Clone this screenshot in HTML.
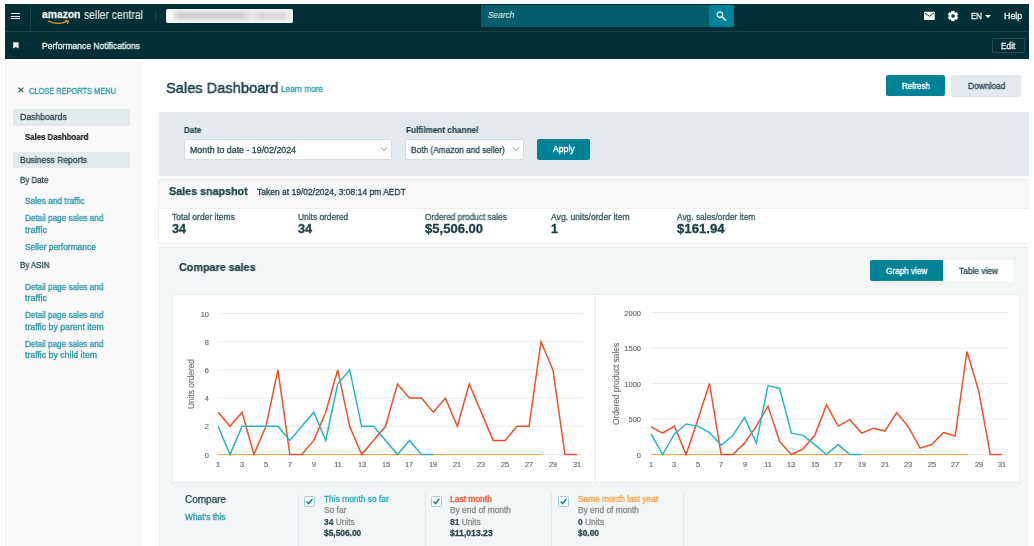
<!DOCTYPE html>
<html><head><meta charset="utf-8"><style>
html,body{margin:0;padding:0;}
body{width:1034px;height:546px;position:relative;overflow:hidden;background:#fff;font-family:"Liberation Sans", sans-serif;}
.t{position:absolute;white-space:nowrap;will-change:transform;}
.r{position:absolute;}
</style></head><body>
<div class="r" style="left:5px;top:4px;width:1024.00px;height:55.40px;background:#002f36;"></div>
<div class="r" style="left:5px;top:31px;width:1024.00px;height:1.00px;background:#1b4248;"></div>
<div class="r" style="left:30px;top:4px;width:1.00px;height:27.00px;background:#1b4248;"></div>
<div class="r" style="left:11px;top:12.8px;width:9.00px;height:1.30px;background:#e8eeee;"></div>
<div class="r" style="left:11px;top:15.5px;width:9.00px;height:1.30px;background:#e8eeee;"></div>
<div class="r" style="left:11px;top:18.2px;width:9.00px;height:1.30px;background:#e8eeee;"></div>
<div class="t" style="left:42.20px;top:9.22px;font-size:11.2px;line-height:11.2px;color:#f2f5f5;font-weight:700;-webkit-text-stroke:0.3px #f2f5f5;transform:scaleX(0.9257);transform-origin:0 0;">amazon</div>
<div class="t" style="left:83.60px;top:8.54px;font-size:12px;line-height:12px;color:#e6ecec;-webkit-text-stroke:0.15px #e6ecec;transform:scaleX(0.8674);transform-origin:0 0;">seller central</div>
<svg class="r" style="left:46px;top:18.7px" width="26" height="8" viewBox="0 0 26 8"><path d="M2.5 2.2 Q12 6.6 21.5 2.4" stroke="#e8912d" stroke-width="1.3" fill="none" stroke-linecap="round"/><path d="M19.3 1.4 L22.4 1.9 L21.6 4.6" stroke="#e8912d" stroke-width="1.1" fill="none" stroke-linecap="round"/></svg>
<div class="r" style="left:154.5px;top:10px;width:1.00px;height:12.00px;background:#1b4248;"></div>
<div class="r" style="left:166.1px;top:8.8px;width:126.8px;height:14.5px;background:#f6f6f6;border-radius:2px;overflow:hidden"><div style="position:absolute;left:9px;top:3.5px;width:73px;height:7px;background:#c9c9c9;filter:blur(2.2px)"></div><div style="position:absolute;left:91px;top:3.5px;width:30px;height:7px;background:#d4d4d4;filter:blur(2.2px)"></div><div style="position:absolute;left:78px;top:4px;width:16px;height:6px;background:#dedede;filter:blur(2px)"></div></div>
<div class="r" style="left:481px;top:5px;width:228.00px;height:22.00px;background:#005e6c;"></div>
<div class="r" style="left:709px;top:5px;width:25.40px;height:22.00px;background:#008296;"></div>
<div class="t" style="left:488.10px;top:11.28px;font-size:9px;line-height:9px;color:#dfe9ea;font-style:italic;-webkit-text-stroke:0.1px #dfe9ea;transform:scaleX(0.9223);transform-origin:0 0;">Search</div>
<svg class="r" style="left:714px;top:9px" width="16" height="16" viewBox="0 0 16 16"><circle cx="5.9" cy="5.6" r="2.75" stroke="#f2f6f6" stroke-width="1.2" fill="none"/><path d="M8 7.8 L11.6 11.2" stroke="#f2f6f6" stroke-width="1.4" stroke-linecap="round"/></svg>
<svg class="r" style="left:923px;top:11px" width="13" height="10" viewBox="0 0 13 10"><rect x="1" y="0.8" width="10.8" height="8.2" rx="0.7" fill="#f4f7f7"/><path d="M2 2.2 L6.4 5.2 L10.8 2.2" stroke="#002f36" stroke-width="0.9" fill="none"/></svg>
<svg class="r" style="left:947.1px;top:9.9px" width="12" height="12" viewBox="0 0 12 12"><polygon points="4.56,1.00 7.44,1.00 7.70,2.49 8.19,2.78 9.61,2.26 11.05,4.75 9.89,5.71 9.89,6.29 11.05,7.25 9.61,9.74 8.19,9.22 7.70,9.51 7.44,11.00 4.56,11.00 4.30,9.51 3.81,9.22 2.39,9.74 0.95,7.25 2.11,6.29 2.11,5.71 0.95,4.75 2.39,2.26 3.81,2.78 4.30,2.49" fill="#f4f7f7" stroke="#f4f7f7" stroke-width="0.3" stroke-linejoin="round"/><circle cx="6" cy="6" r="1.7" fill="#002f36"/></svg>
<div class="t" style="left:971.00px;top:11.75px;font-size:8.8px;line-height:8.8px;color:#eef3f3;-webkit-text-stroke:0.3px #eef3f3;transform:scaleX(0.8998);transform-origin:0 0;">EN</div>
<svg class="r" style="left:984px;top:14px" width="8" height="5" viewBox="0 0 8 5"><path d="M1 1 L7 1 L4 4 Z" fill="#eef3f3"/></svg>
<div class="t" style="left:1003.50px;top:11.75px;font-size:8.8px;line-height:8.8px;color:#eef3f3;-webkit-text-stroke:0.3px #eef3f3;transform:scaleX(1.0056);transform-origin:0 0;">Help</div>
<svg class="r" style="left:13px;top:42px" width="6" height="7" viewBox="0 0 6 7"><path d="M0.2 0.2 H5.6 V6.6 L2.9 4.9 L0.2 6.6 Z" fill="#f4f7f7"/></svg>
<div class="t" style="left:42.00px;top:41.52px;font-size:8.6px;line-height:8.6px;color:#eef3f3;-webkit-text-stroke:0.3px #eef3f3;transform:scaleX(0.9953);transform-origin:0 0;">Performance Notifications</div>
<div class="r" style="left:991.5px;top:37.7px;width:33.5px;height:15.3px;box-sizing:border-box;border:1px solid #224a4f;border-radius:1px"></div>
<div class="t" style="left:1000.80px;top:41.77px;font-size:8.3px;line-height:8.3px;color:#eef3f3;-webkit-text-stroke:0.3px #eef3f3;transform:scaleX(0.9929);transform-origin:0 0;">Edit</div>
<div class="r" style="left:5px;top:61px;width:137.50px;height:485.00px;background:#f9f9f9;"></div>
<div class="r" style="left:5px;top:61px;width:1.00px;height:485.00px;background:#f1f1f1;"></div>
<svg class="r" style="left:17px;top:86px" width="8" height="8" viewBox="0 0 8 8"><path d="M1.6 1.6 L6.2 6.2 M6.2 1.6 L1.6 6.2" stroke="#33494e" stroke-width="1.1"/></svg>
<div class="t" style="left:28.80px;top:86.62px;font-size:8.6px;line-height:8.6px;color:#2b95a6;-webkit-text-stroke:0.3px #2b95a6;transform:scaleX(0.8642);transform-origin:0 0;">CLOSE REPORTS MENU</div>
<div class="r" style="left:13px;top:109.2px;width:117.30px;height:16.40px;background:#e3eaec;"></div>
<div class="t" style="left:19.90px;top:113.26px;font-size:8.9px;line-height:8.9px;color:#2c4a50;-webkit-text-stroke:0.3px #2c4a50;transform:scaleX(0.9753);transform-origin:0 0;">Dashboards</div>
<div class="t" style="left:25.00px;top:132.62px;font-size:8.6px;line-height:8.6px;color:#0f1111;font-weight:700;-webkit-text-stroke:0.15px #0f1111;transform:scaleX(0.9086);transform-origin:0 0;">Sales Dashboard</div>
<div class="r" style="left:13px;top:151.8px;width:117.30px;height:16.60px;background:#e3eaec;"></div>
<div class="t" style="left:19.90px;top:155.96px;font-size:8.9px;line-height:8.9px;color:#2c4a50;-webkit-text-stroke:0.3px #2c4a50;transform:scaleX(0.9649);transform-origin:0 0;">Business Reports</div>
<div class="t" style="left:19.80px;top:175.87px;font-size:8.3px;line-height:8.3px;color:#2c4a50;-webkit-text-stroke:0.3px #2c4a50;transform:scaleX(0.9586);transform-origin:0 0;">By Date</div>
<div class="t" style="left:25.10px;top:196.89px;font-size:8.4px;line-height:8.4px;color:#2b95a6;-webkit-text-stroke:0.3px #2b95a6;transform:scaleX(0.9921);transform-origin:0 0;">Sales and traffic</div>
<div class="t" style="left:25.10px;top:214.19px;font-size:8.4px;line-height:8.4px;color:#2b95a6;-webkit-text-stroke:0.3px #2b95a6;transform:scaleX(0.9717);transform-origin:0 0;">Detail page sales and</div>
<div class="t" style="left:25.10px;top:225.79px;font-size:8.4px;line-height:8.4px;color:#2b95a6;-webkit-text-stroke:0.3px #2b95a6;transform:scaleX(1.0793);transform-origin:0 0;">traffic</div>
<div class="t" style="left:25.10px;top:243.19px;font-size:8.4px;line-height:8.4px;color:#2b95a6;-webkit-text-stroke:0.3px #2b95a6;transform:scaleX(1.0006);transform-origin:0 0;">Seller performance</div>
<div class="t" style="left:19.80px;top:261.47px;font-size:8.3px;line-height:8.3px;color:#2c4a50;-webkit-text-stroke:0.3px #2c4a50;transform:scaleX(0.9512);transform-origin:0 0;">By ASIN</div>
<div class="t" style="left:25.10px;top:282.69px;font-size:8.4px;line-height:8.4px;color:#2b95a6;-webkit-text-stroke:0.3px #2b95a6;transform:scaleX(0.9717);transform-origin:0 0;">Detail page sales and</div>
<div class="t" style="left:25.10px;top:293.99px;font-size:8.4px;line-height:8.4px;color:#2b95a6;-webkit-text-stroke:0.3px #2b95a6;transform:scaleX(1.0793);transform-origin:0 0;">traffic</div>
<div class="t" style="left:25.10px;top:311.49px;font-size:8.4px;line-height:8.4px;color:#2b95a6;-webkit-text-stroke:0.3px #2b95a6;transform:scaleX(0.9717);transform-origin:0 0;">Detail page sales and</div>
<div class="t" style="left:25.10px;top:322.79px;font-size:8.4px;line-height:8.4px;color:#2b95a6;-webkit-text-stroke:0.3px #2b95a6;transform:scaleX(1.0403);transform-origin:0 0;">traffic by parent item</div>
<div class="t" style="left:25.10px;top:339.99px;font-size:8.4px;line-height:8.4px;color:#2b95a6;-webkit-text-stroke:0.3px #2b95a6;transform:scaleX(0.9717);transform-origin:0 0;">Detail page sales and</div>
<div class="t" style="left:25.10px;top:351.29px;font-size:8.4px;line-height:8.4px;color:#2b95a6;-webkit-text-stroke:0.3px #2b95a6;transform:scaleX(1.0418);transform-origin:0 0;">traffic by child item</div>
<div class="t" style="left:165.80px;top:80.77px;font-size:14.8px;line-height:14.8px;color:#163840;-webkit-text-stroke:0.45px #163840;transform:scaleX(0.9892);transform-origin:0 0;">Sales Dashboard</div>
<div class="t" style="left:280.90px;top:85.37px;font-size:8.3px;line-height:8.3px;color:#2b95a6;-webkit-text-stroke:0.3px #2b95a6;transform:scaleX(0.9873);transform-origin:0 0;">Learn more</div>
<div class="r" style="left:886px;top:75.4px;width:59px;height:20.8px;background:#008296;border-radius:2px"></div>
<div class="t" style="left:901.70px;top:81.99px;font-size:8.4px;line-height:8.4px;color:#fff;-webkit-text-stroke:0.35px #fff;transform:scaleX(0.9486);transform-origin:0 0;">Refresh</div>
<div class="r" style="left:951.3px;top:75.4px;width:69.7px;height:20.8px;background:#e3e9ec;border-radius:2px;box-shadow:0 1px 1px rgba(0,0,0,0.12)"></div>
<div class="t" style="left:967.60px;top:81.92px;font-size:8.6px;line-height:8.6px;color:#2c4a50;-webkit-text-stroke:0.3px #2c4a50;transform:scaleX(0.9779);transform-origin:0 0;">Download</div>
<div class="r" style="left:158.6px;top:112px;width:870.40px;height:64.00px;background:#e3e9ec;"></div>
<div class="t" style="left:184.40px;top:126.19px;font-size:8.4px;line-height:8.4px;color:#1b3c43;font-weight:700;-webkit-text-stroke:0.1px #1b3c43;transform:scaleX(0.9557);transform-origin:0 0;">Date</div>
<div class="r" style="left:183.6px;top:138.8px;width:208.7px;height:21.4px;background:#fff;box-sizing:border-box;border:1px solid #d5dcde;border-radius:2px"></div>
<div class="t" style="left:189.90px;top:145.52px;font-size:8.6px;line-height:8.6px;color:#2c4a50;-webkit-text-stroke:0.3px #2c4a50;transform:scaleX(1.0274);transform-origin:0 0;">Month to date - 19/02/2024</div>
<svg class="r" style="left:380px;top:146px" width="8" height="6" viewBox="0 0 8 6"><path d="M1 1.5 L4 4.5 L7 1.5" stroke="#6b7b80" stroke-width="0.9" fill="none"/></svg>
<div class="t" style="left:405.80px;top:126.19px;font-size:8.4px;line-height:8.4px;color:#1b3c43;font-weight:700;-webkit-text-stroke:0.1px #1b3c43;transform:scaleX(0.9771);transform-origin:0 0;">Fulfilment channel</div>
<div class="r" style="left:405.4px;top:139.1px;width:118.8px;height:21.3px;background:#fff;box-sizing:border-box;border:1px solid #d5dcde;border-radius:2px"></div>
<div class="t" style="left:410.60px;top:145.80px;font-size:8.5px;line-height:8.5px;color:#2c4a50;-webkit-text-stroke:0.3px #2c4a50;transform:scaleX(0.9781);transform-origin:0 0;">Both (Amazon and seller)</div>
<svg class="r" style="left:512px;top:146px" width="8" height="6" viewBox="0 0 8 6"><path d="M1 1.5 L4 4.5 L7 1.5" stroke="#6b7b80" stroke-width="0.9" fill="none"/></svg>
<div class="r" style="left:537.3px;top:138.5px;width:52.7px;height:21.3px;background:#008296;border-radius:2px"></div>
<div class="t" style="left:552.80px;top:144.72px;font-size:8.6px;line-height:8.6px;color:#fff;-webkit-text-stroke:0.35px #fff;transform:scaleX(1.0087);transform-origin:0 0;">Apply</div>
<div class="r" style="left:158.4px;top:179px;width:870.6px;height:64.5px;box-sizing:border-box;border:1px solid #eceeee;border-right:none;background:#fff"></div>
<div class="r" style="left:159.4px;top:180px;width:869.60px;height:27.50px;background:#f7f7f7;"></div>
<div class="r" style="left:159.4px;top:207.5px;width:869.60px;height:1.00px;background:#efefef;"></div>
<div class="t" style="left:168.80px;top:186.17px;font-size:10.9px;line-height:10.9px;color:#1b3c43;font-weight:700;-webkit-text-stroke:0.25px #1b3c43;transform:scaleX(0.9856);transform-origin:0 0;">Sales snapshot</div>
<div class="t" style="left:257.30px;top:187.80px;font-size:8.5px;line-height:8.5px;color:#1b3c43;-webkit-text-stroke:0.3px #1b3c43;transform:scaleX(0.9984);transform-origin:0 0;">Taken at 19/02/2024, 3:08:14 pm AEDT</div>
<div class="t" style="left:171.90px;top:212.99px;font-size:8.4px;line-height:8.4px;color:#3a5a60;-webkit-text-stroke:0.3px #3a5a60;transform:scaleX(1.0163);transform-origin:0 0;">Total order items</div>
<div class="t" style="left:171.90px;top:222.73px;font-size:12.6px;line-height:12.6px;color:#1b3c43;font-weight:700;-webkit-text-stroke:0.3px #1b3c43;transform:scaleX(1.0062);transform-origin:0 0;">34</div>
<div class="t" style="left:298.00px;top:212.99px;font-size:8.4px;line-height:8.4px;color:#3a5a60;-webkit-text-stroke:0.3px #3a5a60;">Units ordered</div>
<div class="t" style="left:298.00px;top:222.73px;font-size:12.6px;line-height:12.6px;color:#1b3c43;font-weight:700;-webkit-text-stroke:0.3px #1b3c43;transform:scaleX(1.0062);transform-origin:0 0;">34</div>
<div class="t" style="left:425.10px;top:212.99px;font-size:8.4px;line-height:8.4px;color:#3a5a60;-webkit-text-stroke:0.3px #3a5a60;transform:scaleX(0.9879);transform-origin:0 0;">Ordered product sales</div>
<div class="t" style="left:425.10px;top:222.73px;font-size:12.6px;line-height:12.6px;color:#1b3c43;font-weight:700;-webkit-text-stroke:0.3px #1b3c43;transform:scaleX(1.0366);transform-origin:0 0;">$5,506.00</div>
<div class="t" style="left:550.90px;top:212.99px;font-size:8.4px;line-height:8.4px;color:#3a5a60;-webkit-text-stroke:0.3px #3a5a60;transform:scaleX(1.0263);transform-origin:0 0;">Avg. units/order item</div>
<div class="t" style="left:550.90px;top:222.73px;font-size:12.6px;line-height:12.6px;color:#1b3c43;font-weight:700;-webkit-text-stroke:0.3px #1b3c43;">1</div>
<div class="t" style="left:677.40px;top:212.99px;font-size:8.4px;line-height:8.4px;color:#3a5a60;-webkit-text-stroke:0.3px #3a5a60;transform:scaleX(0.9969);transform-origin:0 0;">Avg. sales/order item</div>
<div class="t" style="left:677.40px;top:222.73px;font-size:12.6px;line-height:12.6px;color:#1b3c43;font-weight:700;-webkit-text-stroke:0.3px #1b3c43;transform:scaleX(1.0452);transform-origin:0 0;">$161.94</div>
<div class="r" style="left:158.5px;top:247px;width:870.5px;height:310px;box-sizing:border-box;border:1px solid #eceeee;border-right:none;background:#f3f6f7"></div>
<div class="t" style="left:178.50px;top:261.77px;font-size:10.9px;line-height:10.9px;color:#1b3c43;font-weight:700;-webkit-text-stroke:0.25px #1b3c43;transform:scaleX(0.9891);transform-origin:0 0;">Compare sales</div>
<div class="r" style="left:870px;top:260px;width:73.3px;height:20.8px;background:#008296;border-radius:2px 0 0 2px"></div>
<div class="t" style="left:886.00px;top:266.79px;font-size:8.4px;line-height:8.4px;color:#fff;-webkit-text-stroke:0.35px #fff;transform:scaleX(0.9792);transform-origin:0 0;">Graph view</div>
<div class="r" style="left:943.3px;top:260px;width:69.8px;height:20.8px;background:#fff;border-radius:0 2px 2px 0"></div>
<div class="t" style="left:959.30px;top:266.70px;font-size:8.5px;line-height:8.5px;color:#2c4a50;-webkit-text-stroke:0.3px #2c4a50;transform:scaleX(0.9828);transform-origin:0 0;">Table view</div>
<div class="r" style="left:171.8px;top:294px;width:848px;height:189px;box-sizing:border-box;border:1px solid #e9eded;background:#fff"></div>
<div class="r" style="left:595.3px;top:295px;width:1.00px;height:187.00px;background:#eceeee;"></div>
<svg class="r" style="left:0;top:0" width="1034" height="546"><line x1="217.8" y1="454.50" x2="583.2" y2="454.50" stroke="#ececec" stroke-width="1"/><line x1="217.8" y1="426.30" x2="583.2" y2="426.30" stroke="#ececec" stroke-width="1"/><line x1="217.8" y1="398.10" x2="583.2" y2="398.10" stroke="#ececec" stroke-width="1"/><line x1="217.8" y1="369.90" x2="583.2" y2="369.90" stroke="#ececec" stroke-width="1"/><line x1="217.8" y1="341.70" x2="583.2" y2="341.70" stroke="#ececec" stroke-width="1"/><line x1="217.8" y1="313.50" x2="583.2" y2="313.50" stroke="#ececec" stroke-width="1"/><line x1="218.1" y1="454.50" x2="541.02" y2="454.50" stroke="#f6a847" stroke-width="1.2"/><polyline points="218.10,412.20 230.06,426.30 242.02,412.20 253.98,454.50 265.94,426.30 277.90,369.90 289.86,454.50 301.82,454.50 313.78,440.40 325.74,412.20 337.70,369.90 349.66,426.30 361.62,454.50 373.58,440.40 385.54,426.30 397.50,384.00 409.46,398.10 421.42,398.10 433.38,412.20 445.34,398.10 457.30,426.30 469.26,384.00 481.22,412.20 493.18,440.40 505.14,440.40 517.10,426.30 529.06,426.30 541.02,341.70 552.98,369.90 564.94,454.50 576.90,454.50" fill="none" stroke="#e8512a" stroke-width="1.5" stroke-linejoin="miter"/><polyline points="218.10,426.30 230.06,454.50 242.02,426.30 253.98,426.30 265.94,426.30 277.90,426.30 289.86,440.40 301.82,426.30 313.78,412.20 325.74,440.40 337.70,384.00 349.66,369.90 361.62,426.30 373.58,426.30 385.54,440.40 397.50,454.50 409.46,440.40 421.42,454.50 433.38,454.50" fill="none" stroke="#2ab3c3" stroke-width="1.5" stroke-linejoin="miter"/></svg>
<div class="t" style="left:148.6px;width:60px;text-align:right;top:451.50px;font-size:7.5px;line-height:7.5px;color:#6a6a6a;-webkit-text-stroke:0.15px #6a6a6a">0</div>
<div class="t" style="left:148.6px;width:60px;text-align:right;top:423.30px;font-size:7.5px;line-height:7.5px;color:#6a6a6a;-webkit-text-stroke:0.15px #6a6a6a">2</div>
<div class="t" style="left:148.6px;width:60px;text-align:right;top:395.10px;font-size:7.5px;line-height:7.5px;color:#6a6a6a;-webkit-text-stroke:0.15px #6a6a6a">4</div>
<div class="t" style="left:148.6px;width:60px;text-align:right;top:366.90px;font-size:7.5px;line-height:7.5px;color:#6a6a6a;-webkit-text-stroke:0.15px #6a6a6a">6</div>
<div class="t" style="left:148.6px;width:60px;text-align:right;top:338.70px;font-size:7.5px;line-height:7.5px;color:#6a6a6a;-webkit-text-stroke:0.15px #6a6a6a">8</div>
<div class="t" style="left:148.6px;width:60px;text-align:right;top:310.50px;font-size:7.5px;line-height:7.5px;color:#6a6a6a;-webkit-text-stroke:0.15px #6a6a6a">10</div>
<div class="t" style="left:198.10px;width:40px;text-align:center;top:460.53px;font-size:7.4px;line-height:7.4px;color:#6a6a6a;-webkit-text-stroke:0.15px #6a6a6a">1</div>
<div class="t" style="left:222.02px;width:40px;text-align:center;top:460.53px;font-size:7.4px;line-height:7.4px;color:#6a6a6a;-webkit-text-stroke:0.15px #6a6a6a">3</div>
<div class="t" style="left:245.94px;width:40px;text-align:center;top:460.53px;font-size:7.4px;line-height:7.4px;color:#6a6a6a;-webkit-text-stroke:0.15px #6a6a6a">5</div>
<div class="t" style="left:269.86px;width:40px;text-align:center;top:460.53px;font-size:7.4px;line-height:7.4px;color:#6a6a6a;-webkit-text-stroke:0.15px #6a6a6a">7</div>
<div class="t" style="left:293.78px;width:40px;text-align:center;top:460.53px;font-size:7.4px;line-height:7.4px;color:#6a6a6a;-webkit-text-stroke:0.15px #6a6a6a">9</div>
<div class="t" style="left:317.70px;width:40px;text-align:center;top:460.53px;font-size:7.4px;line-height:7.4px;color:#6a6a6a;-webkit-text-stroke:0.15px #6a6a6a">11</div>
<div class="t" style="left:341.62px;width:40px;text-align:center;top:460.53px;font-size:7.4px;line-height:7.4px;color:#6a6a6a;-webkit-text-stroke:0.15px #6a6a6a">13</div>
<div class="t" style="left:365.54px;width:40px;text-align:center;top:460.53px;font-size:7.4px;line-height:7.4px;color:#6a6a6a;-webkit-text-stroke:0.15px #6a6a6a">15</div>
<div class="t" style="left:389.46px;width:40px;text-align:center;top:460.53px;font-size:7.4px;line-height:7.4px;color:#6a6a6a;-webkit-text-stroke:0.15px #6a6a6a">17</div>
<div class="t" style="left:413.38px;width:40px;text-align:center;top:460.53px;font-size:7.4px;line-height:7.4px;color:#6a6a6a;-webkit-text-stroke:0.15px #6a6a6a">19</div>
<div class="t" style="left:437.30px;width:40px;text-align:center;top:460.53px;font-size:7.4px;line-height:7.4px;color:#6a6a6a;-webkit-text-stroke:0.15px #6a6a6a">21</div>
<div class="t" style="left:461.22px;width:40px;text-align:center;top:460.53px;font-size:7.4px;line-height:7.4px;color:#6a6a6a;-webkit-text-stroke:0.15px #6a6a6a">23</div>
<div class="t" style="left:485.14px;width:40px;text-align:center;top:460.53px;font-size:7.4px;line-height:7.4px;color:#6a6a6a;-webkit-text-stroke:0.15px #6a6a6a">25</div>
<div class="t" style="left:509.06px;width:40px;text-align:center;top:460.53px;font-size:7.4px;line-height:7.4px;color:#6a6a6a;-webkit-text-stroke:0.15px #6a6a6a">27</div>
<div class="t" style="left:532.98px;width:40px;text-align:center;top:460.53px;font-size:7.4px;line-height:7.4px;color:#6a6a6a;-webkit-text-stroke:0.15px #6a6a6a">29</div>
<div class="t" style="left:556.90px;width:40px;text-align:center;top:460.53px;font-size:7.4px;line-height:7.4px;color:#6a6a6a;-webkit-text-stroke:0.15px #6a6a6a">31</div>
<div class="t" style="left:130.7px;top:380px;width:120px;text-align:center;font-size:8.3px;line-height:8px;color:#6f6f6f;-webkit-text-stroke:0.15px #6f6f6f;transform:rotate(-90deg);transform-origin:60px 4px">Units ordered</div>
<svg class="r" style="left:0;top:0" width="1034" height="546"><line x1="650.8" y1="454.50" x2="1007.6" y2="454.50" stroke="#ececec" stroke-width="1"/><line x1="650.8" y1="419.00" x2="1007.6" y2="419.00" stroke="#ececec" stroke-width="1"/><line x1="650.8" y1="383.50" x2="1007.6" y2="383.50" stroke="#ececec" stroke-width="1"/><line x1="650.8" y1="348.00" x2="1007.6" y2="348.00" stroke="#ececec" stroke-width="1"/><line x1="650.8" y1="312.50" x2="1007.6" y2="312.50" stroke="#ececec" stroke-width="1"/><line x1="651" y1="454.50" x2="966.90" y2="454.50" stroke="#f6a847" stroke-width="1.2"/><polyline points="651.00,426.81 662.70,433.20 674.40,426.10 686.10,454.50 697.80,419.71 709.50,383.50 721.20,454.50 732.90,454.50 744.60,443.14 756.30,426.10 768.00,406.22 779.70,441.72 791.40,454.50 803.10,448.82 814.80,435.33 826.50,404.80 838.20,426.10 849.90,419.71 861.60,433.20 873.30,428.23 885.00,431.07 896.70,412.61 908.40,426.81 920.10,448.11 931.80,444.56 943.50,432.49 955.20,436.04 966.90,351.55 978.60,390.60 990.30,454.50 1002.00,454.50" fill="none" stroke="#e8512a" stroke-width="1.5" stroke-linejoin="miter"/><polyline points="651.00,433.91 662.70,454.50 674.40,433.91 686.10,423.97 697.80,426.10 709.50,432.49 721.20,445.27 732.90,435.33 744.60,417.58 756.30,443.14 768.00,385.63 779.70,388.47 791.40,433.20 803.10,435.33 814.80,444.56 826.50,454.50 838.20,444.56 849.90,454.50 861.60,454.50" fill="none" stroke="#2ab3c3" stroke-width="1.5" stroke-linejoin="miter"/></svg>
<div class="t" style="left:581.2px;width:60px;text-align:right;top:451.50px;font-size:7.5px;line-height:7.5px;color:#6a6a6a;-webkit-text-stroke:0.15px #6a6a6a">0</div>
<div class="t" style="left:581.2px;width:60px;text-align:right;top:416.00px;font-size:7.5px;line-height:7.5px;color:#6a6a6a;-webkit-text-stroke:0.15px #6a6a6a">500</div>
<div class="t" style="left:581.2px;width:60px;text-align:right;top:380.50px;font-size:7.5px;line-height:7.5px;color:#6a6a6a;-webkit-text-stroke:0.15px #6a6a6a">1000</div>
<div class="t" style="left:581.2px;width:60px;text-align:right;top:345.00px;font-size:7.5px;line-height:7.5px;color:#6a6a6a;-webkit-text-stroke:0.15px #6a6a6a">1500</div>
<div class="t" style="left:581.2px;width:60px;text-align:right;top:309.50px;font-size:7.5px;line-height:7.5px;color:#6a6a6a;-webkit-text-stroke:0.15px #6a6a6a">2000</div>
<div class="t" style="left:631.00px;width:40px;text-align:center;top:460.53px;font-size:7.4px;line-height:7.4px;color:#6a6a6a;-webkit-text-stroke:0.15px #6a6a6a">1</div>
<div class="t" style="left:654.40px;width:40px;text-align:center;top:460.53px;font-size:7.4px;line-height:7.4px;color:#6a6a6a;-webkit-text-stroke:0.15px #6a6a6a">3</div>
<div class="t" style="left:677.80px;width:40px;text-align:center;top:460.53px;font-size:7.4px;line-height:7.4px;color:#6a6a6a;-webkit-text-stroke:0.15px #6a6a6a">5</div>
<div class="t" style="left:701.20px;width:40px;text-align:center;top:460.53px;font-size:7.4px;line-height:7.4px;color:#6a6a6a;-webkit-text-stroke:0.15px #6a6a6a">7</div>
<div class="t" style="left:724.60px;width:40px;text-align:center;top:460.53px;font-size:7.4px;line-height:7.4px;color:#6a6a6a;-webkit-text-stroke:0.15px #6a6a6a">9</div>
<div class="t" style="left:748.00px;width:40px;text-align:center;top:460.53px;font-size:7.4px;line-height:7.4px;color:#6a6a6a;-webkit-text-stroke:0.15px #6a6a6a">11</div>
<div class="t" style="left:771.40px;width:40px;text-align:center;top:460.53px;font-size:7.4px;line-height:7.4px;color:#6a6a6a;-webkit-text-stroke:0.15px #6a6a6a">13</div>
<div class="t" style="left:794.80px;width:40px;text-align:center;top:460.53px;font-size:7.4px;line-height:7.4px;color:#6a6a6a;-webkit-text-stroke:0.15px #6a6a6a">15</div>
<div class="t" style="left:818.20px;width:40px;text-align:center;top:460.53px;font-size:7.4px;line-height:7.4px;color:#6a6a6a;-webkit-text-stroke:0.15px #6a6a6a">17</div>
<div class="t" style="left:841.60px;width:40px;text-align:center;top:460.53px;font-size:7.4px;line-height:7.4px;color:#6a6a6a;-webkit-text-stroke:0.15px #6a6a6a">19</div>
<div class="t" style="left:865.00px;width:40px;text-align:center;top:460.53px;font-size:7.4px;line-height:7.4px;color:#6a6a6a;-webkit-text-stroke:0.15px #6a6a6a">21</div>
<div class="t" style="left:888.40px;width:40px;text-align:center;top:460.53px;font-size:7.4px;line-height:7.4px;color:#6a6a6a;-webkit-text-stroke:0.15px #6a6a6a">23</div>
<div class="t" style="left:911.80px;width:40px;text-align:center;top:460.53px;font-size:7.4px;line-height:7.4px;color:#6a6a6a;-webkit-text-stroke:0.15px #6a6a6a">25</div>
<div class="t" style="left:935.20px;width:40px;text-align:center;top:460.53px;font-size:7.4px;line-height:7.4px;color:#6a6a6a;-webkit-text-stroke:0.15px #6a6a6a">27</div>
<div class="t" style="left:958.60px;width:40px;text-align:center;top:460.53px;font-size:7.4px;line-height:7.4px;color:#6a6a6a;-webkit-text-stroke:0.15px #6a6a6a">29</div>
<div class="t" style="left:982.00px;width:40px;text-align:center;top:460.53px;font-size:7.4px;line-height:7.4px;color:#6a6a6a;-webkit-text-stroke:0.15px #6a6a6a">31</div>
<div class="t" style="left:555.6px;top:380px;width:120px;text-align:center;font-size:8.3px;line-height:8px;color:#6f6f6f;-webkit-text-stroke:0.15px #6f6f6f;transform:rotate(-90deg);transform-origin:60px 4px">Ordered product sales</div>
<div class="t" style="left:184.50px;top:495.03px;font-size:10px;line-height:10px;color:#1b3c43;-webkit-text-stroke:0.25px #1b3c43;transform:scaleX(0.9945);transform-origin:0 0;">Compare</div>
<div class="t" style="left:184.50px;top:512.79px;font-size:8.4px;line-height:8.4px;color:#2b95a6;-webkit-text-stroke:0.3px #2b95a6;transform:scaleX(0.9948);transform-origin:0 0;">What's this</div>
<div class="r" style="left:298.4px;top:493px;width:1.00px;height:53.00px;background:#e3e8ea;"></div>
<div class="r" style="left:424.9px;top:493px;width:1.00px;height:53.00px;background:#e3e8ea;"></div>
<div class="r" style="left:551.3px;top:493px;width:1.00px;height:53.00px;background:#e3e8ea;"></div>
<div class="r" style="left:682.7px;top:493px;width:1.00px;height:53.00px;background:#e3e8ea;"></div>
<svg class="r" style="left:304px;top:496.3px" width="11" height="11" viewBox="0 0 11 11"><rect x="0.5" y="0.5" width="10" height="10" rx="0.8" fill="#fff" stroke="#9fcfd7" stroke-width="1"/><path d="M2.6 5.6 L4.6 7.6 L8.4 3" stroke="#16798a" stroke-width="1.4" fill="none"/></svg>
<div class="t" style="left:323.70px;top:494.89px;font-size:8.4px;line-height:8.4px;color:#2aa9bb;-webkit-text-stroke:0.3px #2aa9bb;transform:scaleX(1.0002);transform-origin:0 0;">This month so far</div>
<div class="t" style="left:323.70px;top:506.39px;font-size:8.4px;line-height:8.4px;color:#8a8a8a;-webkit-text-stroke:0.3px #8a8a8a;">So far</div>
<div class="t" style="left:323.70px;top:517.89px;font-size:8.4px;line-height:8.4px;color:#8a8a8a;-webkit-text-stroke:0.3px #8a8a8a;"><b style="color:#2c4a50;-webkit-text-stroke:0.2px #2c4a50">34</b> Units</div>
<div class="t" style="left:323.70px;top:529.39px;font-size:8.4px;line-height:8.4px;color:#2c4a50;font-weight:700;-webkit-text-stroke:0.3px #2c4a50;transform:scaleX(0.9982);transform-origin:0 0;">$5,506.00</div>
<svg class="r" style="left:430.8px;top:496.3px" width="11" height="11" viewBox="0 0 11 11"><rect x="0.5" y="0.5" width="10" height="10" rx="0.8" fill="#fff" stroke="#9fcfd7" stroke-width="1"/><path d="M2.6 5.6 L4.6 7.6 L8.4 3" stroke="#16798a" stroke-width="1.4" fill="none"/></svg>
<div class="t" style="left:449.80px;top:494.89px;font-size:8.4px;line-height:8.4px;color:#e4502d;-webkit-text-stroke:0.3px #e4502d;transform:scaleX(1.0107);transform-origin:0 0;">Last month</div>
<div class="t" style="left:449.80px;top:506.39px;font-size:8.4px;line-height:8.4px;color:#8a8a8a;-webkit-text-stroke:0.3px #8a8a8a;">By end of month</div>
<div class="t" style="left:449.80px;top:517.89px;font-size:8.4px;line-height:8.4px;color:#8a8a8a;-webkit-text-stroke:0.3px #8a8a8a;"><b style="color:#2c4a50;-webkit-text-stroke:0.2px #2c4a50">81</b> Units</div>
<div class="t" style="left:449.80px;top:529.39px;font-size:8.4px;line-height:8.4px;color:#2c4a50;font-weight:700;-webkit-text-stroke:0.3px #2c4a50;transform:scaleX(1.0295);transform-origin:0 0;">$11,013.23</div>
<svg class="r" style="left:557.6px;top:496.3px" width="11" height="11" viewBox="0 0 11 11"><rect x="0.5" y="0.5" width="10" height="10" rx="0.8" fill="#fff" stroke="#9fcfd7" stroke-width="1"/><path d="M2.6 5.6 L4.6 7.6 L8.4 3" stroke="#16798a" stroke-width="1.4" fill="none"/></svg>
<div class="t" style="left:577.60px;top:494.89px;font-size:8.4px;line-height:8.4px;color:#f3a23b;-webkit-text-stroke:0.3px #f3a23b;transform:scaleX(0.9878);transform-origin:0 0;">Same month last year</div>
<div class="t" style="left:577.60px;top:506.39px;font-size:8.4px;line-height:8.4px;color:#8a8a8a;-webkit-text-stroke:0.3px #8a8a8a;">By end of month</div>
<div class="t" style="left:577.60px;top:517.89px;font-size:8.4px;line-height:8.4px;color:#8a8a8a;-webkit-text-stroke:0.3px #8a8a8a;"><b style="color:#2c4a50;-webkit-text-stroke:0.2px #2c4a50">0</b> Units</div>
<div class="t" style="left:577.60px;top:529.39px;font-size:8.4px;line-height:8.4px;color:#2c4a50;font-weight:700;-webkit-text-stroke:0.3px #2c4a50;">$0.00</div>
</body></html>
